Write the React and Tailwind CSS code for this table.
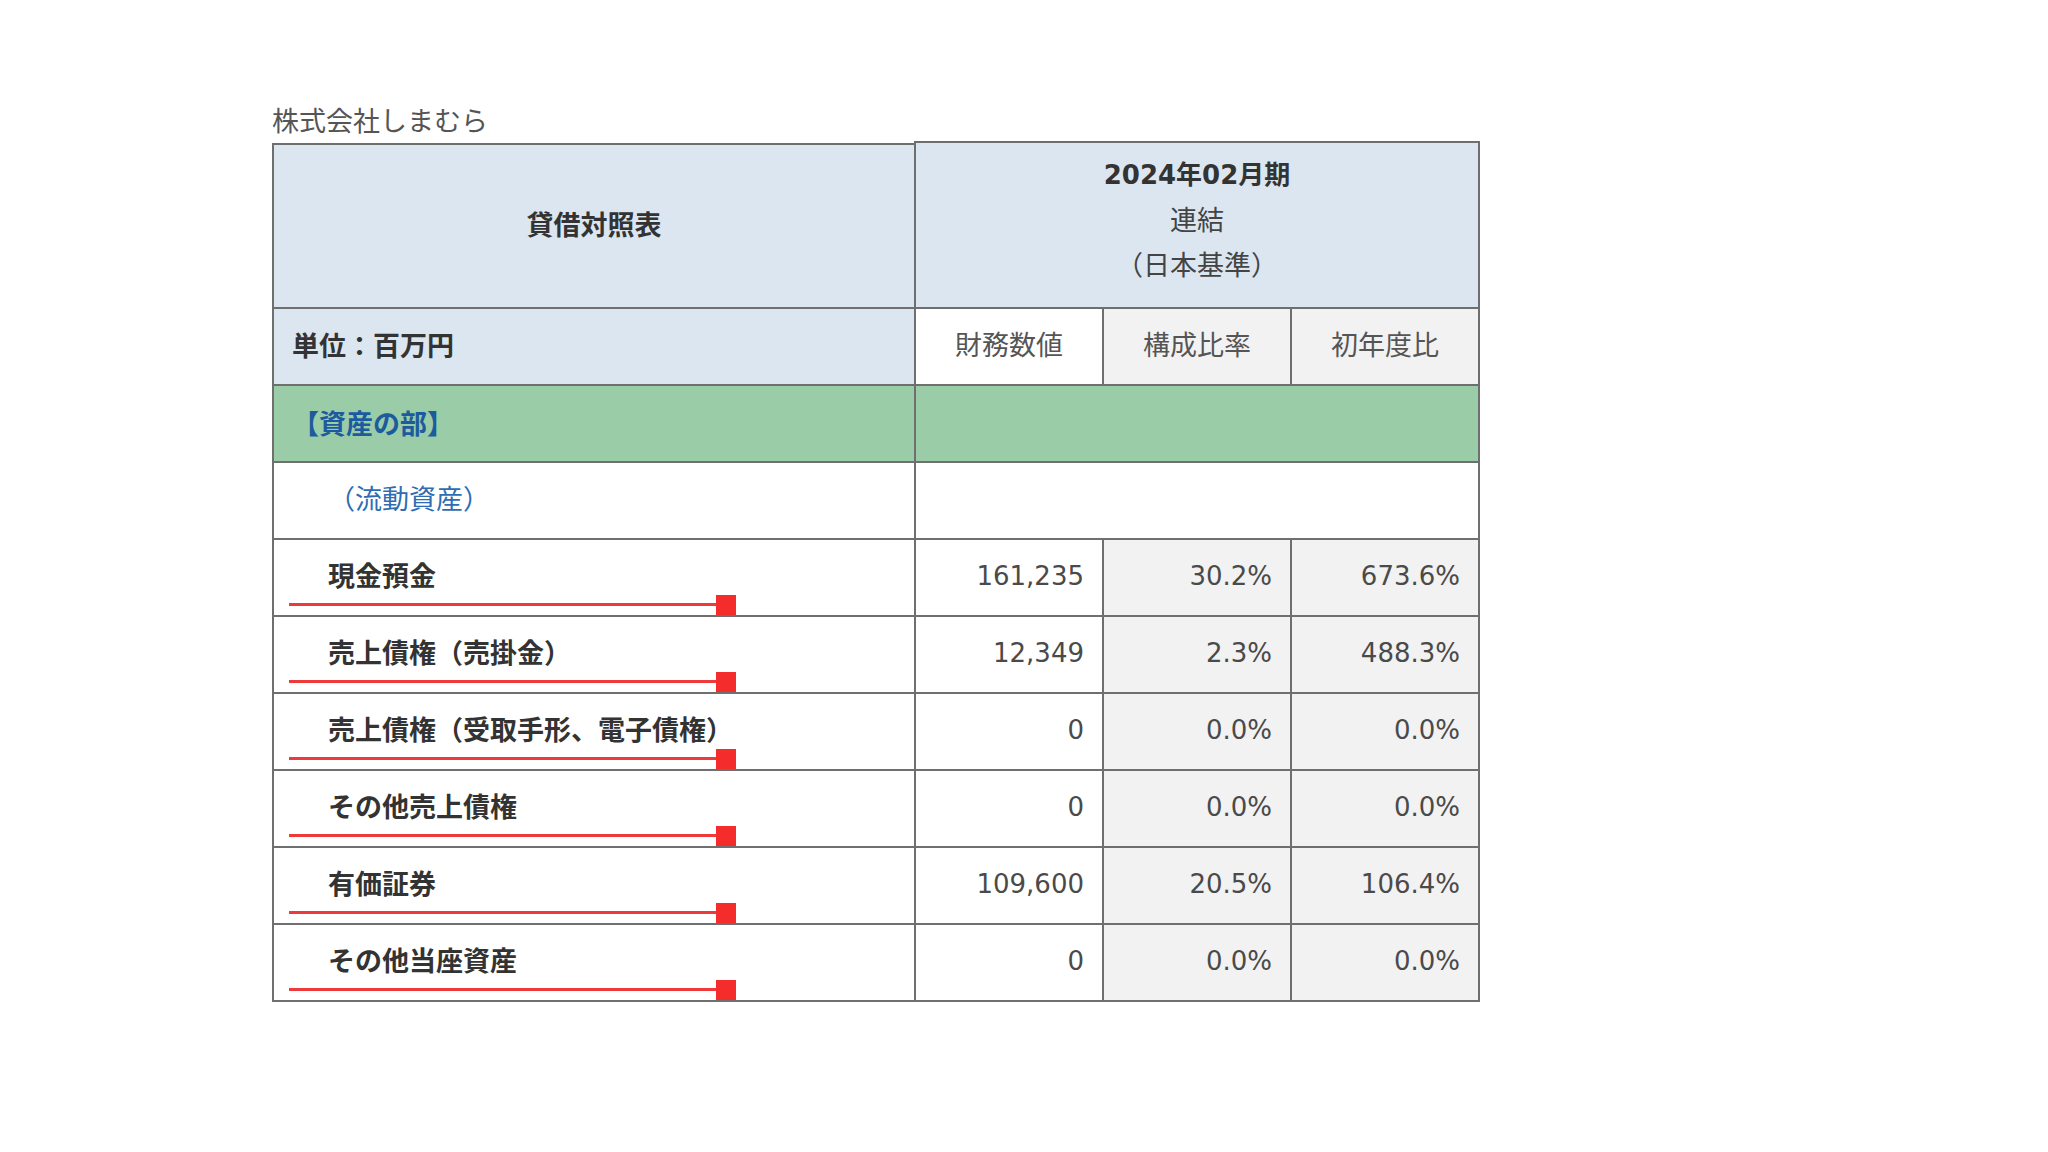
import React from "react";

const rows = [
  { label: "現金預金", v: "161,235", r: "30.2%", y: "673.6%" },
  { label: "売上債権（売掛金）", v: "12,349", r: "2.3%", y: "488.3%" },
  { label: "売上債権（受取手形、電子債権）", v: "0", r: "0.0%", y: "0.0%" },
  { label: "その他売上債権", v: "0", r: "0.0%", y: "0.0%" },
  { label: "有価証券", v: "109,600", r: "20.5%", y: "106.4%" },
  { label: "その他当座資産", v: "0", r: "0.0%", y: "0.0%" },
];

const jp = { fontFamily: '"Noto Sans CJK JP", "Noto Sans CJK SC", sans-serif' };
const num = { fontFamily: '"DejaVu Sans", "Noto Sans CJK JP", sans-serif' };

export default function App() {
  return (
    <div className="min-h-[1152px] w-[2048px] bg-white pl-[272px] pt-[103px]">
      <div
        className="h-[40px] text-[27px] leading-[34px] text-[#555555]"
        style={jp}
      >
        株式会社しまむら
      </div>
      <div className="flex items-start">
        {/* Left table */}
        <div className="w-[642px] border-l-2 border-t-2 border-[#6f6f6f]">
          <div
            className="flex h-[164px] items-center justify-center border-b-2 border-[#6f6f6f] bg-[#dce6f0] pb-[3px] text-[27px] font-bold text-[#333333]"
            style={jp}
          >
            貸借対照表
          </div>
          <div
            className="flex h-[77px] items-center border-b-2 border-[#6f6f6f] bg-[#dce6f0] pb-[2px] pl-[18px] text-[27px] font-bold text-[#333333]"
            style={jp}
          >
            単位：百万円
          </div>
          <div
            className="flex h-[77px] items-center border-b-2 border-[#6f6f6f] bg-[#9acca8] pl-[18px] text-[27px] font-bold text-[#1c5b9e]"
            style={jp}
          >
            【資産の部】
          </div>
          <div
            className="flex h-[77px] items-center border-b-2 border-[#6f6f6f] bg-white pb-[4px] pl-[54px] text-[27px] text-[#2e6db3]"
            style={jp}
          >
            （流動資産）
          </div>
          {rows.map((row) => (
            <div
              key={row.label}
              className="relative flex h-[77px] items-center border-b-2 border-[#6f6f6f] bg-white pb-[4px] pl-[54px] text-[27px] font-bold text-[#333333]"
              style={jp}
            >
              <span>{row.label}</span>
              <div className="absolute left-[15px] top-[63px] h-[3px] w-[428px] bg-[#ee3a3a]" />
              <div className="absolute left-[442px] top-[55px] h-[20px] w-[20px] bg-[#f52c2c]" />
            </div>
          ))}
        </div>

        {/* Right table */}
        <div className="-mt-[2px] w-[566px] border-l-2 border-t-2 border-[#6f6f6f]">
          <div className="flex h-[166px] flex-col items-center justify-center border-b-2 border-r-2 border-[#6f6f6f] bg-[#dce6f0] pb-[10px] text-[#444444]">
            <div className="text-[26px] font-bold leading-[42px] text-[#333333]" style={num}>
              2024年02月期
            </div>
            <div className="text-[27px] leading-[45px]" style={jp}>
              連結
            </div>
            <div className="text-[27px] leading-[45px]" style={jp}>
              （日本基準）
            </div>
          </div>
          <div className="flex h-[77px] text-[27px] text-[#555555]" style={jp}>
            <div className="flex w-[188px] items-center justify-center border-b-2 border-r-2 border-[#6f6f6f] bg-white pb-[4px]">
              財務数値
            </div>
            <div className="flex w-[188px] items-center justify-center border-b-2 border-r-2 border-[#6f6f6f] bg-[#f2f2f2] pb-[4px]">
              構成比率
            </div>
            <div className="flex w-[188px] items-center justify-center border-b-2 border-r-2 border-[#6f6f6f] bg-[#f2f2f2] pb-[4px]">
              初年度比
            </div>
          </div>
          <div className="h-[77px] border-b-2 border-r-2 border-[#6f6f6f] bg-[#9acca8]" />
          <div className="h-[77px] border-b-2 border-r-2 border-[#6f6f6f] bg-white" />
          {rows.map((row) => (
            <div
              key={row.label}
              className="flex h-[77px] text-[26px] text-[#4a4a4a]"
              style={num}
            >
              <div className="flex w-[188px] items-center justify-end border-b-2 border-r-2 border-[#6f6f6f] bg-white pb-[2px] pr-[18px]">
                {row.v}
              </div>
              <div className="flex w-[188px] items-center justify-end border-b-2 border-r-2 border-[#6f6f6f] bg-[#f2f2f2] pb-[2px] pr-[18px]">
                {row.r}
              </div>
              <div className="flex w-[188px] items-center justify-end border-b-2 border-r-2 border-[#6f6f6f] bg-[#f2f2f2] pb-[2px] pr-[18px]">
                {row.y}
              </div>
            </div>
          ))}
        </div>
      </div>
    </div>
  );
}
